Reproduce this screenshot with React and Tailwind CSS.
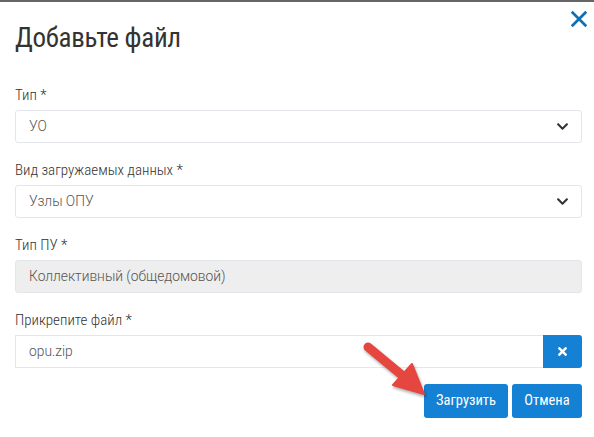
import React from 'react';

const Chevron = () => (
    <svg viewBox="0 0 448 512" className="w-[13px] h-[13px]" fill="#333">
        <path d="M207 381.5L12.7 187.1c-9.4-9.4-9.4-24.6 0-33.9l22.7-22.7c9.4-9.4 24.5-9.4 33.9 0L224 284.5l154.7-154c9.4-9.3 24.5-9.3 33.9 0l22.7 22.7c9.4 9.4 9.4 24.6 0 33.9L241 381.5c-9.4 9.4-24.6 9.4-34 0z" />
    </svg>
);

const SelectBox = ({ value }) => (
    <div className="flex items-center justify-between h-[33px] pl-[13px] pr-[12px] border border-[#e3e6ea] rounded-[3px] bg-white">
        <span className="text-[13.8px] text-[#555] font-light">{value}</span>
        <Chevron />
    </div>
);

const Label = ({ children }) => (
    <div className="h-[20px] leading-[20px] text-[15px] text-[#333] mb-[5px] font-['Roboto_Condensed','Roboto',sans-serif] font-light">{children}</div>
);

const App = () => {
    return (
        <div className="relative w-[594px] h-[437px] bg-white border-t-2 border-[#666] font-['Roboto','Liberation_Sans',sans-serif] overflow-hidden">
            <button className="absolute right-[6px] top-[8px]">
                <svg viewBox="0 0 20 20" className="w-[18px] h-[18px]" stroke="#0e6fb3" strokeWidth="3" strokeLinecap="square">
                    <path d="M3 3L17 17M17 3L3 17" />
                </svg>
            </button>

            <div className="pl-[15px] pr-[12px]">
                <h1 className="pt-[18px] h-[83px] text-[27px] leading-[36px] text-[#333] font-['Roboto_Condensed','Roboto',sans-serif] font-normal tracking-[-0.3px]">
                    Добавьте файл
                </h1>

                <div className="flex flex-col gap-[17px]">
                    <div>
                        <Label>Тип *</Label>
                        <SelectBox value="УО" />
                    </div>
                    <div>
                        <Label>Вид загружаемых данных *</Label>
                        <SelectBox value="Узлы ОПУ" />
                    </div>
                    <div>
                        <Label>Тип ПУ *</Label>
                        <div className="flex items-center h-[33px] pl-[13px] pr-[12px] border border-[#e3e6ea] rounded-[3px] bg-[#eeeeee]">
                            <span className="text-[13.8px] text-[#555] font-light">Коллективный (общедомовой)</span>
                        </div>
                    </div>
                    <div>
                        <Label>Прикрепите файл *</Label>
                        <div className="flex h-[33px]">
                            <div className="flex-1 flex items-center pl-[13px] border border-[#e3e6ea] border-r-0">
                                <span className="text-[13.8px] text-[#555] font-light">opu.zip</span>
                            </div>
                            <button className="w-[39px] flex items-center justify-center bg-[#1481d4] rounded-r-[3px]">
                                <svg viewBox="0 0 352 512" className="w-[11px] h-[13px]" fill="white">
                                    <path d="M242.7 256l100.1-100.1c12.3-12.3 12.3-32.2 0-44.5l-22.2-22.2c-12.3-12.3-32.2-12.3-44.5 0L176 189.3 75.9 89.2c-12.3-12.3-32.2-12.3-44.5 0L9.2 111.4c-12.3 12.3-12.3 32.2 0 44.5L109.3 256 9.2 356.1c-12.3 12.3-12.3 32.2 0 44.5l22.2 22.2c12.3 12.3 32.2 12.3 44.5 0L176 322.7l100.1 100.1c12.3 12.3 32.2 12.3 44.5 0l22.2-22.2c12.3-12.3 12.3-32.2 0-44.5L242.7 256z" />
                                </svg>
                            </button>
                        </div>
                    </div>
                </div>

                <div className="mt-[16px] flex justify-end gap-[4px]">
                    <button className="w-[84px] h-[34px] bg-[#1481d4] rounded-[3px] text-white text-[14.5px] font-normal font-['Roboto_Condensed','Roboto',sans-serif]">
                        Загрузить
                    </button>
                    <button className="w-[70px] h-[34px] bg-[#1481d4] rounded-[3px] text-white text-[14.5px] font-normal font-['Roboto_Condensed','Roboto',sans-serif]">
                        Отмена
                    </button>
                </div>
            </div>

            <svg className="absolute left-[355px] top-[333px] w-[80px] h-[70px] overflow-visible" viewBox="0 0 80 70">
                <g filter="drop-shadow(1px 2px 1.5px rgba(0,0,0,0.35))">
                    <path d="M13 12L48 41" stroke="#e5463f" strokeWidth="9" strokeLinecap="round" />
                    <path d="M38 50L57 29L69 59Z" fill="#e5463f" strokeLinejoin="round" stroke="#e5463f" strokeWidth="2" />
                </g>
            </svg>
        </div>
    );
};

export default App;
